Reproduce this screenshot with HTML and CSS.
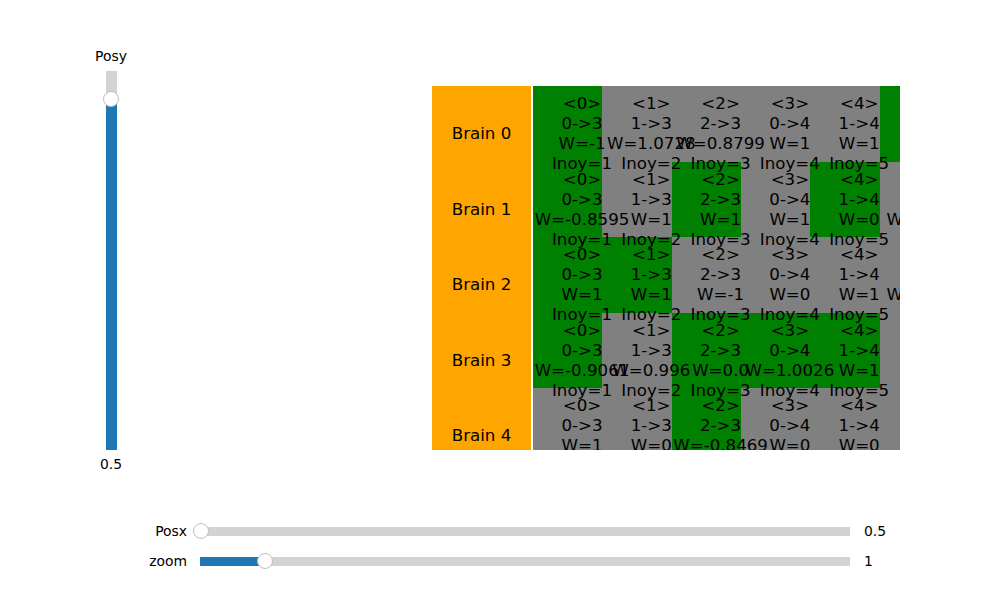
FILE: index.html
```html
<!DOCTYPE html>
<html>
<head>
<meta charset="utf-8">
<link rel="stylesheet" href="styles.css">
</head>
<body>
<div class="figure">
  <div class="main">
    <div class="vslider">
      <div class="vlabel">Posy</div>
      <div class="vtrack">
        <div class="vfill"></div>
        <div class="knob vknob"></div>
      </div>
      <div class="vvalue">0.5</div>
    </div>
    <div class="canvas">
      <!-- rectangles, row by row -->
      <div class="cell brain r0"></div>
      <div class="cell gene on r0 c0"></div><div class="cell gene r0 c1"></div><div class="cell gene r0 c2"></div><div class="cell gene r0 c3"></div><div class="cell gene r0 c4"></div><div class="cell gene on r0 c5"></div>
      <div class="cell brain r1"></div>
      <div class="cell gene on r1 c0"></div><div class="cell gene r1 c1"></div><div class="cell gene on r1 c2"></div><div class="cell gene r1 c3"></div><div class="cell gene on r1 c4"></div><div class="cell gene r1 c5"></div>
      <div class="cell brain r2"></div>
      <div class="cell gene on r2 c0"></div><div class="cell gene on r2 c1"></div><div class="cell gene r2 c2"></div><div class="cell gene r2 c3"></div><div class="cell gene r2 c4"></div><div class="cell gene r2 c5"></div>
      <div class="cell brain r3"></div>
      <div class="cell gene on r3 c0"></div><div class="cell gene r3 c1"></div><div class="cell gene on r3 c2"></div><div class="cell gene on r3 c3"></div><div class="cell gene on r3 c4"></div><div class="cell gene r3 c5"></div>
      <div class="cell brain r4"></div>
      <div class="cell gene r4 c0"></div><div class="cell gene r4 c1"></div><div class="cell gene on r4 c2"></div><div class="cell gene r4 c3"></div><div class="cell gene r4 c4"></div><div class="cell gene r4 c5"></div>

      <!-- labels -->
      <div class="label blabel r0"><span>Brain 0</span></div>
      <div class="label blabel r1"><span>Brain 1</span></div>
      <div class="label blabel r2"><span>Brain 2</span></div>
      <div class="label blabel r3"><span>Brain 3</span></div>
      <div class="label blabel r4"><span>Brain 4</span></div>

      <div class="label glabel r0 c0"><span>&lt;0&gt;</span><span>0-&gt;3</span><span>W=-1</span><span>Inoy=1</span></div>
      <div class="label glabel r0 c1"><span>&lt;1&gt;</span><span>1-&gt;3</span><span>W=1.0728</span><span>Inoy=2</span></div>
      <div class="label glabel r0 c2"><span>&lt;2&gt;</span><span>2-&gt;3</span><span>W=0.8799</span><span>Inoy=3</span></div>
      <div class="label glabel r0 c3"><span>&lt;3&gt;</span><span>0-&gt;4</span><span>W=1</span><span>Inoy=4</span></div>
      <div class="label glabel r0 c4"><span>&lt;4&gt;</span><span>1-&gt;4</span><span>W=1</span><span>Inoy=5</span></div>

      <div class="label glabel r1 c0"><span>&lt;0&gt;</span><span>0-&gt;3</span><span>W=-0.8595</span><span>Inoy=1</span></div>
      <div class="label glabel r1 c1"><span>&lt;1&gt;</span><span>1-&gt;3</span><span>W=1</span><span>Inoy=2</span></div>
      <div class="label glabel r1 c2"><span>&lt;2&gt;</span><span>2-&gt;3</span><span>W=1</span><span>Inoy=3</span></div>
      <div class="label glabel r1 c3"><span>&lt;3&gt;</span><span>0-&gt;4</span><span>W=1</span><span>Inoy=4</span></div>
      <div class="label glabel r1 c4"><span>&lt;4&gt;</span><span>1-&gt;4</span><span>W=0</span><span>Inoy=5</span></div>
      <div class="label glabel r1 c5"><span>&nbsp;</span><span>&nbsp;</span><span>W=-0.712</span><span>&nbsp;</span></div>

      <div class="label glabel r2 c0"><span>&lt;0&gt;</span><span>0-&gt;3</span><span>W=1</span><span>Inoy=1</span></div>
      <div class="label glabel r2 c1"><span>&lt;1&gt;</span><span>1-&gt;3</span><span>W=1</span><span>Inoy=2</span></div>
      <div class="label glabel r2 c2"><span>&lt;2&gt;</span><span>2-&gt;3</span><span>W=-1</span><span>Inoy=3</span></div>
      <div class="label glabel r2 c3"><span>&lt;3&gt;</span><span>0-&gt;4</span><span>W=0</span><span>Inoy=4</span></div>
      <div class="label glabel r2 c4"><span>&lt;4&gt;</span><span>1-&gt;4</span><span>W=1</span><span>Inoy=5</span></div>
      <div class="label glabel r2 c5"><span>&nbsp;</span><span>&nbsp;</span><span>W=-0.712</span><span>&nbsp;</span></div>

      <div class="label glabel r3 c0"><span>&lt;0&gt;</span><span>0-&gt;3</span><span>W=-0.9061</span><span>Inoy=1</span></div>
      <div class="label glabel r3 c1"><span>&lt;1&gt;</span><span>1-&gt;3</span><span>W=0.996</span><span>Inoy=2</span></div>
      <div class="label glabel r3 c2"><span>&lt;2&gt;</span><span>2-&gt;3</span><span>W=0.0</span><span>Inoy=3</span></div>
      <div class="label glabel r3 c3"><span>&lt;3&gt;</span><span>0-&gt;4</span><span>W=1.0026</span><span>Inoy=4</span></div>
      <div class="label glabel r3 c4"><span>&lt;4&gt;</span><span>1-&gt;4</span><span>W=1</span><span>Inoy=5</span></div>

      <div class="label glabel r4 c0"><span>&lt;0&gt;</span><span>0-&gt;3</span><span>W=1</span><span>Inoy=1</span></div>
      <div class="label glabel r4 c1"><span>&lt;1&gt;</span><span>1-&gt;3</span><span>W=0</span><span>Inoy=2</span></div>
      <div class="label glabel r4 c2"><span>&lt;2&gt;</span><span>2-&gt;3</span><span>W=-0.8469</span><span>Inoy=3</span></div>
      <div class="label glabel r4 c3"><span>&lt;3&gt;</span><span>0-&gt;4</span><span>W=0</span><span>Inoy=4</span></div>
      <div class="label glabel r4 c4"><span>&lt;4&gt;</span><span>1-&gt;4</span><span>W=0</span><span>Inoy=5</span></div>
    </div>
  </div>
  <div class="hsliders">
    <div class="hrow">
      <div class="hlabel">Posx</div>
      <div class="htrack">
        <div class="knob hknob-posx"></div>
      </div>
      <div class="hvalue">0.5</div>
    </div>
    <div class="hrow">
      <div class="hlabel">zoom</div>
      <div class="htrack">
        <div class="hfill"></div>
        <div class="knob hknob-zoom"></div>
      </div>
      <div class="hvalue">1</div>
    </div>
  </div>
</div>
</body>
</html>
```

FILE: styles.css
```css
html, body {
  margin: 0;
  padding: 0;
  background: #ffffff;
}

.figure {
  width: 1000px;
  height: 600px;
  overflow: hidden;
  font-family: "DejaVu Sans", "Liberation Sans", sans-serif;
  color: #000;
  background: #fff;
}

.main {
  display: flex;
  height: 480px;
}

/* vertical slider */
.vslider {
  width: 40px;
  margin-left: 91px;
  padding-top: 48px;
  display: flex;
  flex-direction: column;
  align-items: center;
}

.vlabel, .vvalue, .hlabel, .hvalue {
  font-size: 13.9px;
  line-height: 16px;
  white-space: nowrap;
}

.vtrack {
  position: relative;
  margin-top: 7px;
  width: 11px;
  height: 379px;
  background: #d3d3d3;
}

.vfill {
  position: absolute;
  left: 0;
  bottom: 0;
  width: 100%;
  height: 351px;
  background: #1f77b4;
}

.knob {
  position: absolute;
  width: 14px;
  height: 14px;
  border: 1px solid #bfbfbf;
  border-radius: 50%;
  background: #ffffff;
}

.vknob {
  top: 20px;
  left: -2.5px;
}

.vvalue {
  margin-top: 6px;
}

/* diagram canvas */
.canvas {
  position: relative;
  margin-left: 301px;
  margin-top: 86px;
  width: 468px;
  height: 364px;
  overflow: hidden;
}

.cell {
  position: absolute;
  height: 96px;
}

.brain {
  left: 0;
  width: 99px;
  background: #ffa500;
}

.gene {
  width: 98px;
  background: #808080;
}

.gene.on {
  background: #008000;
}

.r0 { top: 0; }
.r1 { top: 75.5px; }
.r2 { top: 151px; }
.r3 { top: 226.5px; }
.r4 { top: 302px; }

.c0 { left: 101px; }
.c1 { left: 170.3px; }
.c2 { left: 239.6px; }
.c3 { left: 308.9px; }
.c4 { left: 378.2px; }
.c5 { left: 447.5px; }

.label {
  position: absolute;
  height: 96px;
  display: flex;
  flex-direction: column;
  align-items: center;
  justify-content: center;
  font-size: 16.67px;
  line-height: 20px;
  white-space: nowrap;
}

.blabel {
  left: 0;
  width: 99px;
}

.glabel {
  width: 98px;
}

/* horizontal sliders */
.hsliders {
  margin-top: 43px;
  display: flex;
  flex-direction: column;
  gap: 14px;
}

.hrow {
  display: flex;
  align-items: center;
  height: 16px;
}

.hlabel {
  width: 187px;
  text-align: right;
}

.htrack {
  position: relative;
  margin-left: 13px;
  width: 650px;
  height: 9px;
  background: #d3d3d3;
}

.hfill {
  position: absolute;
  left: 0;
  top: 0;
  height: 100%;
  width: 65px;
  background: #1f77b4;
}

.hknob-posx {
  left: -7px;
  top: -3.5px;
}

.hknob-zoom {
  left: 57px;
  top: -3.5px;
}

.hvalue {
  margin-left: 14px;
}
```
